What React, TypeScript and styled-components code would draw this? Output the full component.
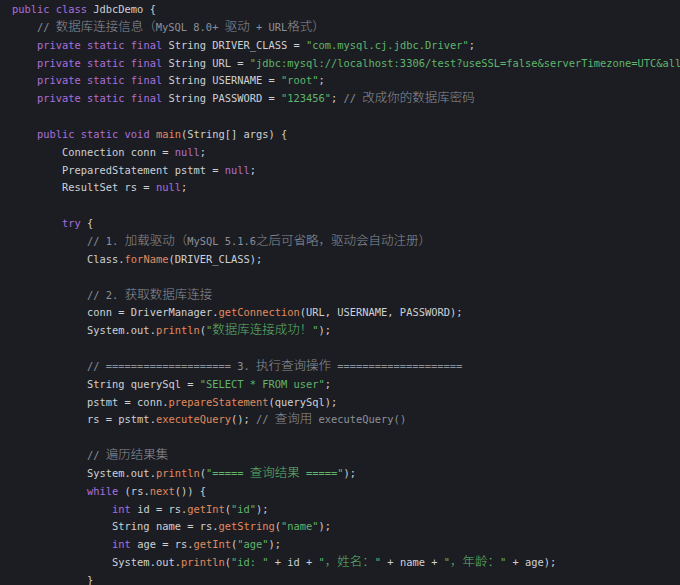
import React from "react";
import styled, { createGlobalStyle } from "styled-components";

const Global = createGlobalStyle`
  html, body { margin: 0; padding: 0; background: #1c1d22; }
  body { width: 680px; height: 585px; overflow: hidden; }
`;

const Editor = styled.div`
  width: 680px;
  height: 585px;
  overflow: hidden;
  background: #1c1d22;
  padding: 1px 0 0 12px;
  box-sizing: border-box;
  font-family: "DejaVu Sans Mono", "Liberation Mono", monospace;
  font-size: 10.4px;
  color: #cdd1d6;
`;

const Line = styled.div`
  height: 17.85px;
  line-height: 17.85px;
  white-space: pre;
`;

type Kind = "kw" | "fn" | "str" | "cm" | "pl";

const colors: Record<Kind, string> = {
  kw: "#ab6fd9",
  fn: "#e08a5e",
  str: "#5fb56d",
  cm: "#8c9099",
  pl: "#cdd1d6",
};

const Tok = styled.span<{ $k: Kind }>`
  color: ${(p) => colors[p.$k]};
`;

const Cjk = styled.span`
  font-family: "Noto Sans CJK SC", sans-serif;
  font-size: 12.5px;
  font-weight: 300;
  line-height: 1;
`;

const cjkRe = /([\u3000-\u9fff\uff00-\uffef]+)/;

function renderText(t: string) {
  return t.split(cjkRe).map((part, i) =>
    i % 2 === 1 ? <Cjk key={i}>{part}</Cjk> : <React.Fragment key={i}>{part}</React.Fragment>
  );
}

type Seg = [Kind, string];
const I1 = "    ";
const I2 = "        ";
const I3 = "            ";
const I4 = "                ";

const lines: Seg[][] = [
  [["kw", "public class "], ["pl", "JdbcDemo {"]],
  [["pl", I1], ["cm", "// 数据库连接信息（MySQL 8.0+ 驱动 + URL格式）"]],
  [["pl", I1], ["kw", "private static final "], ["pl", "String DRIVER_CLASS = "], ["str", "\"com.mysql.cj.jdbc.Driver\""], ["pl", ";"]],
  [["pl", I1], ["kw", "private static final "], ["pl", "String URL = "], ["str", "\"jdbc:mysql://localhost:3306/test?useSSL=false&serverTimezone=UTC&allowPublicKeyRetrieval=true\""], ["pl", ";"]],
  [["pl", I1], ["kw", "private static final "], ["pl", "String USERNAME = "], ["str", "\"root\""], ["pl", ";"]],
  [["pl", I1], ["kw", "private static final "], ["pl", "String PASSWORD = "], ["str", "\"123456\""], ["pl", "; "], ["cm", "// 改成你的数据库密码"]],
  [],
  [["pl", I1], ["kw", "public static void "], ["fn", "main"], ["pl", "(String[] args) {"]],
  [["pl", I2 + "Connection conn = "], ["kw", "null"], ["pl", ";"]],
  [["pl", I2 + "PreparedStatement pstmt = "], ["kw", "null"], ["pl", ";"]],
  [["pl", I2 + "ResultSet rs = "], ["kw", "null"], ["pl", ";"]],
  [],
  [["pl", I2], ["kw", "try"], ["pl", " {"]],
  [["pl", I3], ["cm", "// 1. 加载驱动（MySQL 5.1.6之后可省略，驱动会自动注册）"]],
  [["pl", I3 + "Class."], ["fn", "forName"], ["pl", "(DRIVER_CLASS);"]],
  [],
  [["pl", I3], ["cm", "// 2. 获取数据库连接"]],
  [["pl", I3 + "conn = DriverManager."], ["fn", "getConnection"], ["pl", "(URL, USERNAME, PASSWORD);"]],
  [["pl", I3 + "System.out."], ["fn", "println"], ["pl", "("], ["str", "\"数据库连接成功！\""], ["pl", ");"]],
  [],
  [["pl", I3], ["cm", "// ==================== 3. 执行查询操作 ===================="]],
  [["pl", I3 + "String querySql = "], ["str", "\"SELECT * FROM user\""], ["pl", ";"]],
  [["pl", I3 + "pstmt = conn."], ["fn", "prepareStatement"], ["pl", "(querySql);"]],
  [["pl", I3 + "rs = pstmt."], ["fn", "executeQuery"], ["pl", "(); "], ["cm", "// 查询用 executeQuery()"]],
  [],
  [["pl", I3], ["cm", "// 遍历结果集"]],
  [["pl", I3 + "System.out."], ["fn", "println"], ["pl", "("], ["str", "\"===== 查询结果 =====\""], ["pl", ");"]],
  [["pl", I3], ["kw", "while"], ["pl", " (rs."], ["fn", "next"], ["pl", "()) {"]],
  [["pl", I4], ["kw", "int"], ["pl", " id = rs."], ["fn", "getInt"], ["pl", "("], ["str", "\"id\""], ["pl", ");"]],
  [["pl", I4 + "String name = rs."], ["fn", "getString"], ["pl", "("], ["str", "\"name\""], ["pl", ");"]],
  [["pl", I4], ["kw", "int"], ["pl", " age = rs."], ["fn", "getInt"], ["pl", "("], ["str", "\"age\""], ["pl", ");"]],
  [["pl", I4 + "System.out."], ["fn", "println"], ["pl", "("], ["str", "\"id: \""], ["pl", " + id + "], ["str", "\"，姓名：\""], ["pl", " + name + "], ["str", "\"，年龄：\""], ["pl", " + age);"]],
  [["pl", I3 + "}"]],
];

export default function App() {
  return (
    <>
      <Global />
      <Editor>
        {lines.map((segs, i) => (
          <Line key={i}>
            {segs.length === 0
              ? " "
              : segs.map(([k, t], j) => (
                  <Tok key={j} $k={k}>
                    {renderText(t)}
                  </Tok>
                ))}
          </Line>
        ))}
      </Editor>
    </>
  );
}
